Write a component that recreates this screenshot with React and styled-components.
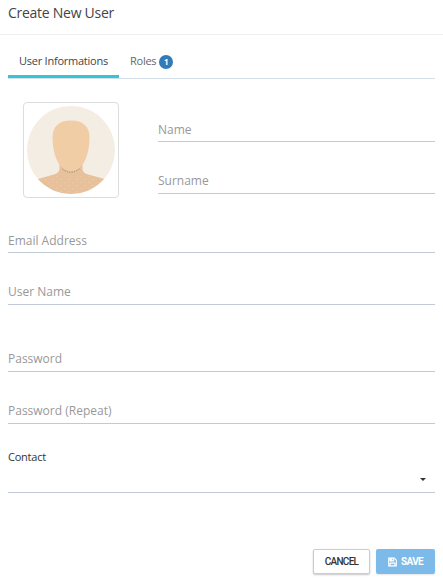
import { useState } from 'react'
import styled, { createGlobalStyle, css } from 'styled-components'

const GlobalStyle = createGlobalStyle`
  *, *::before, *::after {
    box-sizing: border-box;
  }

  body {
    margin: 0;
    background: #fff;
    font-family: "Open Sans", sans-serif;
    color: #333;
  }
`

const Modal = styled.form`
  display: flex;
  flex-direction: column;
  width: 100%;
  height: 582px;
`

Modal.Header = styled.header`
  height: 35px;
  padding: 3px 8px 0;
  border-bottom: 1px solid #efefef;
`

Modal.Title = styled.h4`
  margin: 0;
  color: #444;
  font-size: 14px;
  font-weight: 400;
  line-height: 20px;
  letter-spacing: -0.27px;
`

Modal.Body = styled.div`
  flex: 1;
  padding: 10px 8px 0;
`

Modal.Footer = styled.footer`
  display: flex;
  justify-content: flex-end;
  gap: 6px;
  padding: 0 8px 8px;
`

const Tabs = styled.nav`
  display: flex;
  height: 34px;
  border-bottom: 1px solid #d3e0e9;
`

const Tab = styled.button`
  display: flex;
  align-items: flex-start;
  height: 33px;
  padding: 7px 11px 0;
  border: 0;
  border-bottom: 3px solid ${p => (p.$active ? '#36c6d3' : 'transparent')};
  background: none;
  color: ${p => (p.$active ? '#444' : '#666')};
  font: 400 11px/17px "Open Sans", sans-serif;
  letter-spacing: -0.24px;
`

const Badge = styled.span`
  width: 14px;
  height: 14px;
  margin: 3px 0 0 3px;
  border-radius: 7px;
  background: #337ab7;
  color: #fff;
  font-size: 8px;
  font-weight: 700;
  line-height: 14px;
  letter-spacing: 0;
  text-align: center;
`

const Profile = styled.div`
  display: flex;
  padding-top: 23px;
`

const Frame = styled.div`
  width: 96px;
  height: 96px;
  margin: 0 39px 0 15px;
  padding: 3px;
  border: 1px solid #ddd;
  border-radius: 4px;

  svg {
    display: block;
  }
`

const Fields = styled.div`
  flex: 1;
  padding-top: ${p => p.$top || 0}px;
`

const underline = css`
  width: 100%;
  border: 0;
  border-bottom: 1px solid #c2cad8;
  border-radius: 0;
  background: none;
  outline: 0;
`

const Input = styled.input`
  ${underline}
  display: block;
  height: 27px;
  padding: ${p => (p.$low ? 3 : 1)}px 0 0;
  color: #333;
  font: 400 12px/18px "Open Sans", sans-serif;

  & + & {
    margin-top: 25px;
  }

  &::placeholder {
    color: #999;
    opacity: 1;
  }
`

const Label = styled.label`
  display: block;
  margin-top: 24px;
  font-size: 11px;
  line-height: 17px;
  letter-spacing: -0.24px;
`

const Select = styled.button`
  ${underline}
  display: flex;
  align-items: center;
  justify-content: flex-end;
  height: 28px;
  padding: 2px 9px 0 0;

  &::after {
    content: '';
    border: 3px solid transparent;
    border-top-color: #333;
    border-bottom: 0;
  }
`

const Button = styled.button`
  display: flex;
  align-items: center;
  justify-content: center;
  gap: 4px;
  width: ${p => (p.$primary ? 59 : 57)}px;
  height: 25px;
  padding: 0;
  border: ${p => (p.$primary ? '0' : '1px solid #ccc')};
  border-radius: 2px;
  background: ${p => (p.$primary ? '#7cbbe9' : '#fff')};
  color: ${p => (p.$primary ? '#fff' : '#333')};
  box-shadow: 0 1px 2px rgba(0, 0, 0, ${p => (p.$primary ? 0.1 : 0.22)});
  font: ${p => (p.$primary ? 700 : 500)} 10px/14px Roboto, sans-serif;
  letter-spacing: ${p => (p.$primary ? -0.6 : -0.7)}px;
`

function Avatar() {
  return (
    <svg width="88" height="88" viewBox="0 0 88 88">
      <defs>
        <clipPath id="round"><circle cx="44" cy="44" r="44" /></clipPath>
        <pattern id="dots" width="8" height="6" patternUnits="userSpaceOnUse">
          <circle cx="2" cy="1.5" r=".6" fill="#f3d3ab" />
          <circle cx="6" cy="4.5" r=".6" fill="#f3d3ab" />
        </pattern>
      </defs>
      <g clipPath="url(#round)">
        <rect width="88" height="88" fill="#f4ede3" />
        <path d="M32.500 54h23v9q0 3 4 5l18 5v15H11V73l17.500-5q4-2 4-5z" fill="#e6c19c" />
        <path d="M11 74l17-5 16 3 16-3 17 5v15H11z" fill="url(#dots)" />
        <path
          d="M44 14.500c12 0 18.500 6 18.500 17C62.500 47 57 65 44 65S25.500 47 25.500 31.500c0-11 6.500-17 18.500-17z"
          fill="#f1cda5"
        />
        <path
          d="M35.500 63Q44 70 53.500 62"
          fill="none"
          stroke="#8b7d70"
          strokeWidth="1"
          strokeDasharray="1 1.500"
        />
      </g>
    </svg>
  )
}

function FloppyIcon() {
  return (
    <svg width="9" height="10" viewBox="0 0 1536 1792" fill="currentColor" stroke="currentColor" strokeWidth="90">
      <path d="M384 1536h768v-384h-768v384zm896 0h128v-896q0-14-10-38.500t-20-34.500l-281-281q-10-10-34-20t-39-10v416q0 40-28 68t-68 28h-576q-40 0-68-28t-28-68v-416h-128v1280h128v-416q0-40 28-68t68-28h832q40 0 68 28t28 68v416zm-384-928v-320q0-13-9.500-22.500t-22.500-9.500h-192q-13 0-22.500 9.500t-9.500 22.500v320q0 13 9.500 22.500t22.500 9.500h192q13 0 22.500-9.500t9.500-22.500zm640 32v928q0 40-28 68t-68 28h-1344q-40 0-68-28t-28-68v-1344q0-40 28-68t68-28h928q40 0 88 20t76 48l280 280q28 28 48 76t20 88z" />
    </svg>
  )
}

export default function App() {
  const [tab, setTab] = useState('user')

  return (
    <>
      <GlobalStyle />
      <Modal>
        <Modal.Header>
          <Modal.Title>Create New User</Modal.Title>
        </Modal.Header>
        <Modal.Body>
          <Tabs>
            <Tab type="button" $active={tab === 'user'} onClick={() => setTab('user')}>
              User Informations
            </Tab>
            <Tab type="button" $active={tab === 'roles'} onClick={() => setTab('roles')}>
              Roles <Badge>1</Badge>
            </Tab>
          </Tabs>
          <Profile>
            <Frame><Avatar /></Frame>
            <Fields $top={13}>
              <Input $low placeholder="Name" />
              <Input placeholder="Surname" />
            </Fields>
          </Profile>
          <Fields $top={28}>
            <Input $low placeholder="Email Address" />
            <Input placeholder="User Name" />
          </Fields>
          <Fields $top={40}>
            <Input type="password" placeholder="Password" />
            <Input type="password" placeholder="Password (Repeat)" />
          </Fields>
          <Label htmlFor="contact">Contact</Label>
          <Select type="button" id="contact" />
        </Modal.Body>
        <Modal.Footer>
          <Button type="button">CANCEL</Button>
          <Button type="button" $primary><FloppyIcon /> SAVE</Button>
        </Modal.Footer>
      </Modal>
    </>
  )
}
